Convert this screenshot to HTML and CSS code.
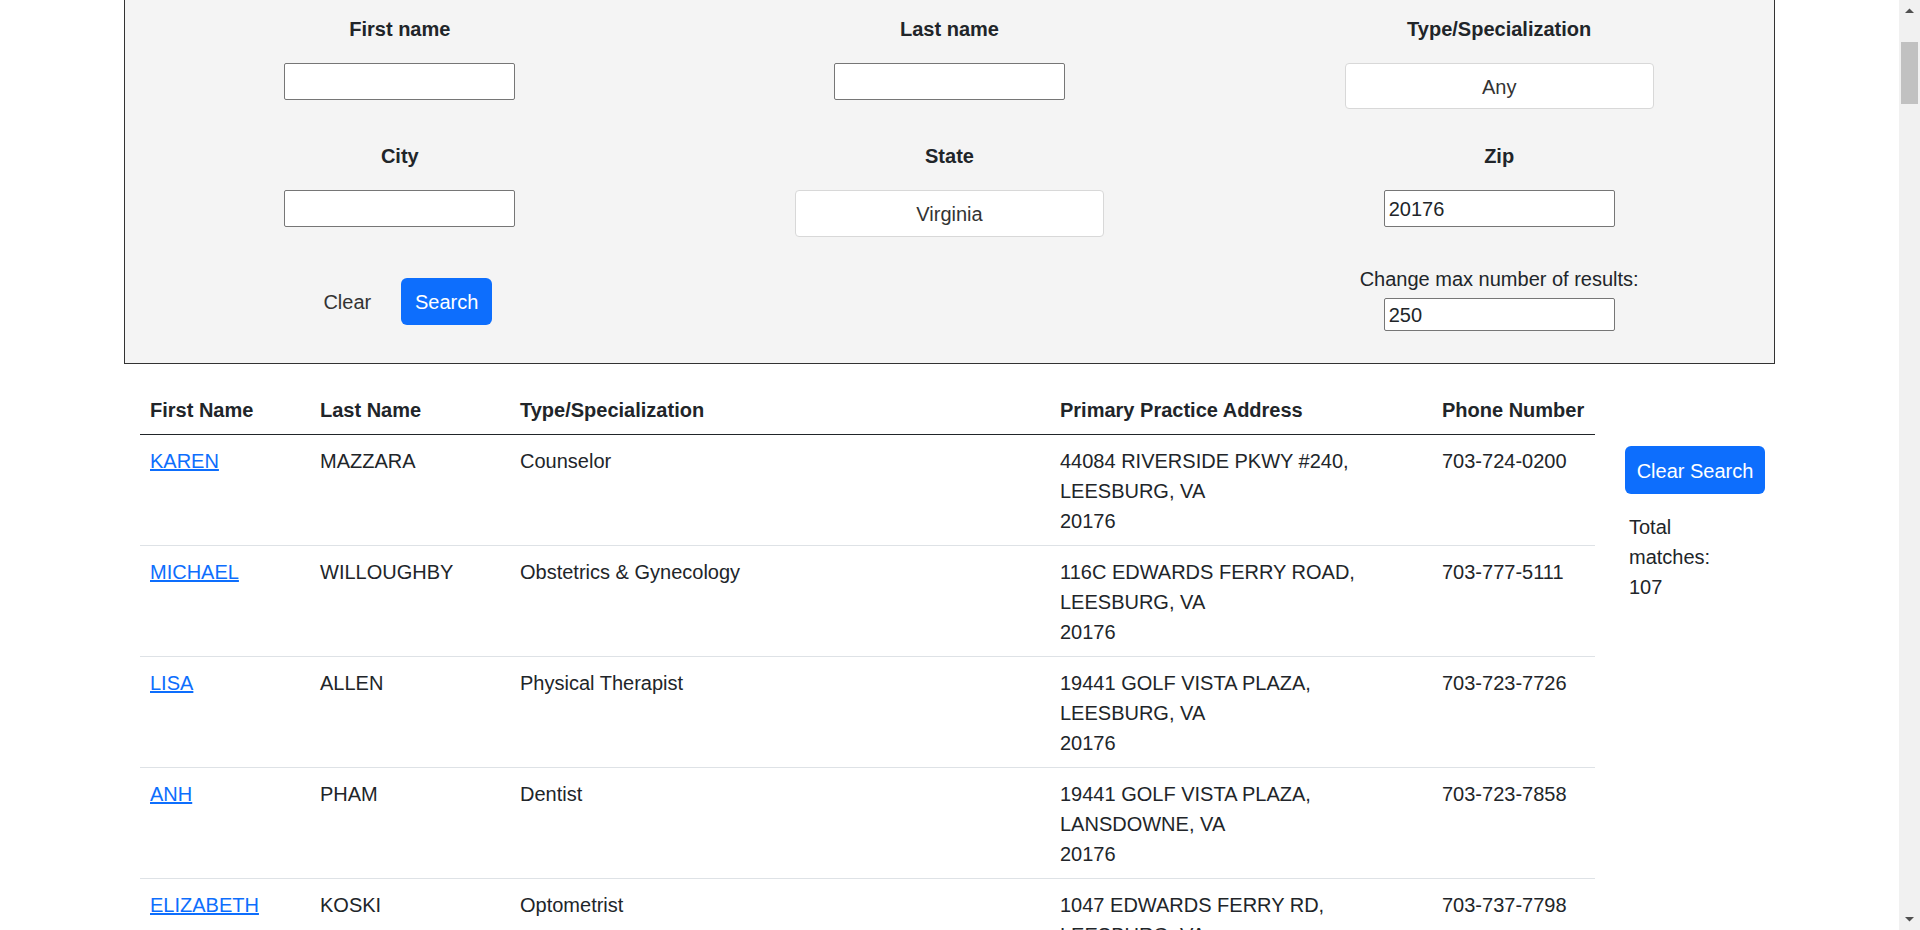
FILE: index.html
```html
<!DOCTYPE html>
<html lang="en">
<head>
<meta charset="utf-8">
<title>Provider Search</title>
<link rel="stylesheet" href="styles.css">
</head>
<body>
<div class="page">
  <form class="search-box">
    <div class="search-row">
      <div class="field">
        <label class="field-label" for="fn">First name</label>
        <input class="text-input" id="fn" type="text" value="">
      </div>
      <div class="field">
        <label class="field-label" for="ln">Last name</label>
        <input class="text-input" id="ln" type="text" value="">
      </div>
      <div class="field">
        <span class="field-label">Type/Specialization</span>
        <div class="dropdown">Any</div>
      </div>
    </div>
    <div class="search-row">
      <div class="field">
        <label class="field-label" for="city">City</label>
        <input class="text-input" id="city" type="text" value="">
      </div>
      <div class="field">
        <span class="field-label">State</span>
        <div class="dropdown dropdown-tall">Virginia</div>
      </div>
      <div class="field">
        <label class="field-label" for="zip">Zip</label>
        <input class="text-input" id="zip" type="text" value="20176">
      </div>
    </div>
    <div class="search-row actions-row">
      <div class="actions">
        <button type="button" class="btn btn-plain">Clear</button>
        <button type="button" class="btn btn-primary btn-search">Search</button>
      </div>
      <div></div>
      <div class="field">
        <label class="max-label" for="max">Change max number of results:</label>
        <input class="text-input text-input-small" id="max" type="text" value="250">
      </div>
    </div>
  </form>

  <div class="results">
    <table class="results-table">
      <colgroup>
        <col class="c-first">
        <col class="c-last">
        <col class="c-type">
        <col class="c-addr">
        <col class="c-phone">
      </colgroup>
      <thead>
        <tr>
          <th>First Name</th>
          <th>Last Name</th>
          <th>Type/Specialization</th>
          <th>Primary Practice Address</th>
          <th>Phone Number</th>
        </tr>
      </thead>
      <tbody>
        <tr>
          <td><a href="#">KAREN</a></td>
          <td>MAZZARA</td>
          <td>Counselor</td>
          <td>44084 RIVERSIDE PKWY #240,<br>LEESBURG, VA<br>20176</td>
          <td>703-724-0200</td>
        </tr>
        <tr>
          <td><a href="#">MICHAEL</a></td>
          <td>WILLOUGHBY</td>
          <td>Obstetrics &amp; Gynecology</td>
          <td>116C EDWARDS FERRY ROAD,<br>LEESBURG, VA<br>20176</td>
          <td>703-777-5111</td>
        </tr>
        <tr>
          <td><a href="#">LISA</a></td>
          <td>ALLEN</td>
          <td>Physical Therapist</td>
          <td>19441 GOLF VISTA PLAZA,<br>LEESBURG, VA<br>20176</td>
          <td>703-723-7726</td>
        </tr>
        <tr>
          <td><a href="#">ANH</a></td>
          <td>PHAM</td>
          <td>Dentist</td>
          <td>19441 GOLF VISTA PLAZA,<br>LANSDOWNE, VA<br>20176</td>
          <td>703-723-7858</td>
        </tr>
        <tr>
          <td><a href="#">ELIZABETH</a></td>
          <td>KOSKI</td>
          <td>Optometrist</td>
          <td>1047 EDWARDS FERRY RD,<br>LEESBURG, VA<br>20176</td>
          <td>703-737-7798</td>
        </tr>
      </tbody>
    </table>
    <aside class="side">
      <button type="button" class="btn btn-primary btn-clear-search">Clear Search</button>
      <p class="total">Total matches: 107</p>
    </aside>
  </div>
</div>

<div class="scrollbar" aria-hidden="true">
  <svg class="sb-arrow sb-up" width="21" height="21" viewBox="0 0 21 21"><path d="M6 13 L10.5 8.5 L15 13 Z" fill="#505050"/></svg>
  <div class="sb-track"><div class="sb-thumb"></div></div>
  <svg class="sb-arrow sb-down" width="21" height="21" viewBox="0 0 21 21"><path d="M6 8 L10.5 12.5 L15 8 Z" fill="#505050"/></svg>
</div>
</body>
</html>
```

FILE: styles.css
```css
html, body {
  margin: 0;
  padding: 0;
}

body {
  font-family: "Liberation Sans", Arial, sans-serif;
  font-size: 20px;
  line-height: 30px;
  color: #212529;
  background: #ffffff;
}

.page {
  width: 1651px;
  margin-left: 124px;
  padding-bottom: 40px;
}

/* ---------- search form ---------- */
.search-box {
  margin: 0;
  background: #f4f4f4;
  border: 1px solid #333333;
  border-top: 0;
  padding: 14px 0 32px;
}

.search-row {
  display: grid;
  grid-template-columns: repeat(3, 1fr);
}

.search-row + .search-row {
  margin-top: 32px;
}

.search-row.actions-row {
  margin-top: 27px;
}

.field {
  display: flex;
  flex-direction: column;
  align-items: center;
}

.field-label {
  font-weight: bold;
  line-height: 30px;
  margin-bottom: 19px;
}

.text-input {
  box-sizing: border-box;
  width: 231px;
  height: 37px;
  margin: 0;
  padding: 2px 4px 0;
  border: 1px solid #767676;
  border-radius: 2px;
  background: #ffffff;
  font-family: "Liberation Sans", Arial, sans-serif;
  font-size: 20px;
  color: #212529;
}

.text-input-small {
  height: 33px;
}

.dropdown {
  box-sizing: border-box;
  width: 309px;
  height: 46px;
  padding-top: 2px;
  border: 1px solid #d8d8d8;
  border-radius: 4px;
  background: #ffffff;
  text-align: center;
  line-height: 42px;
  color: #333333;
}

.dropdown-tall {
  height: 47px;
  line-height: 43px;
}

.actions {
  display: flex;
  justify-content: center;
  align-items: flex-start;
  gap: 14px;
  padding-top: 14px;
}

.btn {
  box-sizing: border-box;
  height: 47px;
  margin: 0;
  padding: 0 16px;
  border: 0;
  border-radius: 6px;
  font-family: "Liberation Sans", Arial, sans-serif;
  font-size: 20px;
  line-height: 49px;
  cursor: pointer;
}

.btn-plain {
  background: transparent;
  color: #333333;
}

.btn-primary {
  background: #0d6efd;
  color: #ffffff;
}

.btn-search {
  width: 91px;
  padding: 0;
}

.max-label {
  line-height: 30px;
  margin-bottom: 4px;
}

/* ---------- results ---------- */
.results {
  display: flex;
  align-items: flex-start;
  gap: 30px;
  margin-top: 20px;
  margin-left: 16px;
}

.results-table {
  width: 1455px;
  table-layout: fixed;
  border-collapse: collapse;
}

.c-first { width: 170px; }
.c-last { width: 200px; }
.c-type { width: 540px; }
.c-addr { width: 382px; }
.c-phone { width: 163px; }

.results-table th {
  text-align: left;
  font-weight: bold;
  padding: 11px 10px 9px;
  line-height: 30px;
  vertical-align: bottom;
  border-bottom: 1px solid #212529;
  white-space: nowrap;
}

.results-table td {
  padding: 11px 10px 9px;
  line-height: 30px;
  vertical-align: top;
  border-bottom: 1px solid #dee2e6;
}

.results-table a {
  color: #0d6efd;
  text-decoration: underline;
}

.side {
  padding-top: 62px;
}

.btn-clear-search {
  width: 140px;
  height: 48px;
  padding: 0;
  line-height: 50px;
}

.total {
  width: 100px;
  margin: 18px 0 0;
  padding-left: 4px;
  line-height: 30px;
}

/* ---------- window scrollbar (page is scrolled) ---------- */
.scrollbar {
  position: fixed;
  top: 0;
  right: 0;
  width: 21px;
  height: 100vh;
  display: flex;
  flex-direction: column;
  background: #f1f1f1;
}

.sb-arrow {
  display: block;
  flex: none;
}

.sb-track {
  flex: 1;
  padding: 21px 2px 0;
}

.sb-thumb {
  height: 62px;
  background: #c1c1c1;
}
```
